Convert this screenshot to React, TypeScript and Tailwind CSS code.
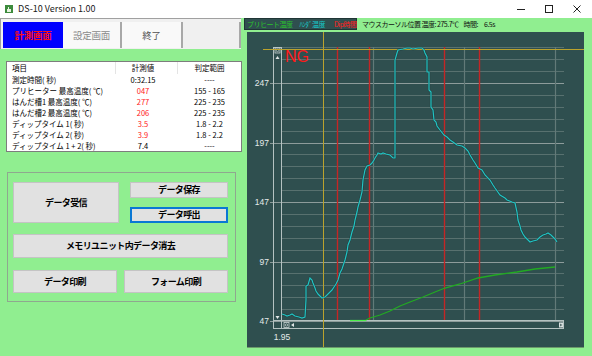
import React from "react";

const JP = { fontFamily: '"Noto Sans CJK JP", "Noto Sans", sans-serif' };

const rows = [
  { name: "測定時間( 秒)", value: "0:32.15", ng: false, range: "----" },
  { name: "プリヒーター 最高温度( ℃)", value: "047", ng: true, range: "155 - 165" },
  { name: "はんだ槽1 最高温度( ℃)", value: "277", ng: true, range: "225 - 235" },
  { name: "はんだ槽2 最高温度( ℃)", value: "206", ng: true, range: "225 - 235" },
  { name: "ディップタイム 1( 秒)", value: "3.5", ng: true, range: "1.8 - 2.2" },
  { name: "ディップタイム 2( 秒)", value: "3.9", ng: true, range: "1.8 - 2.2" },
  { name: "ディップタイム 1 + 2( 秒)", value: "7.4", ng: false, range: "----" },
];

const solder: [number, number][] = [
  [282, 314], [285, 315], [287, 316], [290, 315], [292, 314], [295, 316], [299, 317], [302, 318],
  [305, 317], [306, 300], [306, 286], [308, 285], [310, 278], [312, 280], [313, 283], [315, 288],
  [316, 291], [318, 294], [320, 296], [322, 298], [325, 297], [327, 295], [330, 292], [332, 290],
  [334, 287], [336, 284], [338, 280], [340, 273], [342, 269], [345, 260], [347, 252], [348, 245],
  [350, 240], [352, 232], [354, 226], [355, 220], [357, 212], [358, 207], [360, 200], [362, 192],
  [363, 180], [365, 170], [367, 166], [370, 165], [372, 163], [374, 160], [375, 158], [377, 155],
  [378, 153], [381, 154], [383, 153], [386, 154], [390, 155], [393, 158], [395, 158], [395, 60],
  [397, 53], [398, 50], [403, 49], [407, 48], [410, 48], [413, 49], [418, 48], [422, 48],
  [424, 50], [425, 53], [427, 57], [427, 72], [429, 72], [429, 90], [431, 92], [431, 107],
  [433, 110], [434, 120], [436, 122], [437, 126], [440, 130], [444, 135], [447, 137], [450, 140],
  [453, 142], [457, 145], [462, 146], [465, 148], [468, 151], [470, 155], [473, 160], [475, 163],
  [478, 168], [482, 170], [485, 175], [490, 180], [493, 185], [495, 188], [500, 195], [505, 198],
  [507, 200], [512, 202], [515, 203], [517, 212], [518, 220], [520, 226], [521, 230], [523, 234],
  [525, 237], [528, 240], [530, 242], [533, 241], [537, 240], [540, 237], [543, 235], [546, 234],
  [548, 233], [551, 235], [553, 237], [555, 239], [557, 242],
];

const preheat: [number, number][] = [
  [366, 320], [370, 318], [380, 315], [390, 311], [400, 306], [410, 302], [423, 297], [435, 292],
  [445, 288], [460, 284], [478, 278], [495, 275], [517, 272], [535, 269], [555, 267],
];

const pts = (p: [number, number][]) => p.map(([x, y]) => `${x},${y}`).join(" ");
const yOf = (v: number) => 321 - (v - 47) * 1.19;

const dipLines = [337, 369, 444, 479];
const timeGrid = [373, 464, 555];

function Chart() {
  const grid = [];
  for (let v = 47; v <= 277; v += 10) grid.push(v);
  return (
    <svg width={337} height={315} viewBox="247 32 337 315" className="block">
      <rect x={247} y={32} width={337} height={315} fill="#2f4f4f" />
      {grid.map((v) => {
        const major = (v - 47) % 50 === 0;
        const y = Math.round(yOf(v));
        return (
          <rect key={"h" + v} x={major ? 270 : 282} y={y} width={major ? 294 : 282} height={1} fill={major ? "#8d9c9b" : "#58716f"} />
        );
      })}
      {timeGrid.map((x) => (
        <line key={"g" + x} x1={x + 0.5} x2={x + 0.5} y1={47} y2={321} stroke="#627a78" strokeWidth={1.2} />
      ))}
      {dipLines.map((x) => (
        <line key={"r" + x} x1={x + 0.5} x2={x + 0.5} y1={47} y2={321} stroke="#c42626" strokeWidth={1.4} />
      ))}
      {/* scroll bars */}
      <rect x={273.5} y={47.5} width={8} height={281} fill="none" stroke="#b4c2c1" shapeRendering="crispEdges" />
      <rect x={273.5} y={320.5} width={290} height={8} fill="none" stroke="#b4c2c1" shapeRendering="crispEdges" />
      <rect x={275} y={48} width={5} height={5} fill="none" stroke="#c8d2d1" strokeWidth={0.8} />
      <circle cx={277.5} cy={50.5} r={1.2} fill="none" stroke="#c8d2d1" strokeWidth={0.7} />
      <polygon points="275.5,59 279.5,59 277.5,56" fill="#e0e6e6" />
      <polygon points="275.5,316 279.5,316 277.5,319" fill="#e0e6e6" />
      <rect x={284} y={322.5} width={5} height={5} fill="none" stroke="#c8d2d1" strokeWidth={0.8} />
      <circle cx={286.5} cy={325} r={1.2} fill="none" stroke="#c8d2d1" strokeWidth={0.7} />
      <polygon points="294,323 294,327 291,325" fill="#e0e6e6" />
      <rect x={559} y={322.5} width={4} height={5} fill="#d8e0e0" />
      <polygon points="560,323.5 560,326.5 562.5,325" fill="#5a7070" />
      {/* cursor */}
      <rect x={263} y={49} width={321} height={1} fill="#bba22c" />
      <rect x={323} y={32} width={1} height={315} fill="#bba22c" />
      <polyline points="350,320.5 366,320.5" fill="none" stroke="#4cf04c" strokeWidth={1.2} />
      <polyline points={pts(preheat)} fill="none" stroke="#22aa22" strokeWidth={1.3} />
      <polyline points={pts(solder)} fill="none" stroke="#152e2e" strokeWidth={2.2} opacity={0.5} />
      <polyline points={pts(solder)} fill="none" stroke="#22c4c4" strokeWidth={1.2} />
      <text x={285} y={62} fontSize={16} fill="#ff1a1a" fontFamily="Liberation Sans, Arial, sans-serif">NG</text>
      {[47, 97, 147, 197, 247].map((v) => (
        <text key={"t" + v} x={269} y={yOf(v) + 3} fontSize={8.5} textAnchor="end" fill="#e4eaea" fontFamily="Liberation Sans, Arial, sans-serif">{v}</text>
      ))}
      <text x={282} y={340} fontSize={8.5} textAnchor="middle" fill="#e4eaea" fontFamily="Liberation Sans, Arial, sans-serif">1.95</text>
    </svg>
  );
}

function Btn({ label, className }: { label: string; className: string }) {
  return (
    <div className={`flex items-center justify-center whitespace-nowrap bg-[#e1e1e1] text-[9px] font-bold tracking-[-0.6px] text-black ${className}`} style={JP}>
      {label}
    </div>
  );
}

export default function App() {
  return (
    <div className="flex h-[356px] w-[592px] flex-col overflow-hidden bg-[#90ee90]">
      {/* title bar */}
      <div className="flex h-[18px] shrink-0 items-center bg-white" style={JP}>
        <svg width={8} height={8} viewBox="0 0 8 8" className="ml-[5px]">
          <rect width={8} height={8} fill="#3d8b3d" />
          <path d="M2 7V4h1V2h1v2h2v3z" fill="#e8f4e0" />
        </svg>
        <span className="ml-[5px] text-[9px] text-[#202020]">DS-10 Version 1.00</span>
        <div className="ml-auto flex items-center">
          <svg width={10} height={10} className="mr-[18px]"><line x1={1} x2={9} y1={5.5} y2={5.5} stroke="#222" /></svg>
          <svg width={10} height={10} className="mr-[18px]"><rect x={1.5} y={1.5} width={7} height={7} fill="none" stroke="#222" /></svg>
          <svg width={10} height={10} className="mr-[10px]"><path d="M1.5 1.5l7 7M8.5 1.5l-7 7" stroke="#222" /></svg>
        </div>
      </div>

      <div className="flex flex-1">
        {/* left column */}
        <div className="flex w-[244px] shrink-0 flex-col">
          <div className="flex h-[31px] w-[241px] border-l border-t border-[#a0a0a0] bg-[#f0f0f0] pl-[2px] pt-[3px] text-[9.5px] font-bold tracking-[-0.3px]" style={JP}>
            <div className="flex h-[26px] w-[60px] items-center justify-center bg-[#0000ff] text-[#ff1010]">計測画面</div>
            <div className="flex h-[26px] w-[59px] items-center justify-center border-r-2 border-[#a8a8a8] bg-[#f9f9f9] font-normal text-[#8a8a8a]">設定画面</div>
            <div className="flex h-[26px] w-[61px] items-center justify-center border-r-2 border-[#a8a8a8] bg-[#f9f9f9] font-normal text-[#505050]">終了</div>
            <div className="h-[26px] flex-1 border-r-2 border-[#a8a8a8] bg-[#f0f0f0]" />
          </div>

          {/* result table */}
          <div className="ml-[6px] mt-[12px] h-[91px] w-[236px] border border-[#7d7d7d] bg-white text-[7.5px] leading-none text-black" style={JP}>
            <div className="flex h-[12px] items-center">
              <div className="h-full w-[109px] border-r border-[#e4e4e4] pl-[5px] pt-[2px]">項目</div>
              <div className="w-[54px] text-center">計測値</div>
              <div className="h-full w-[8px] border-r border-[#e4e4e4]" />
              <div className="flex-1 text-center">判定範囲</div>
            </div>
            {rows.map((r) => (
              <div key={r.name} className="flex h-[11px] items-center">
                <div className="w-[109px] whitespace-nowrap pl-[5px]">{r.name}</div>
                <div className={`w-[54px] text-center ${r.ng ? "text-[#ff2020]" : "text-black"}`}>{r.value}</div>
                <div className="w-[8px]" />
                <div className="flex-1 text-center">{r.range}</div>
              </div>
            ))}
          </div>

          {/* buttons group */}
          <div className="ml-[7px] mt-[20px] flex h-[130px] w-[229px] flex-col border border-[#8fa88f] px-[5px] pt-[9px]">
            <div className="flex gap-[11px]">
              <Btn label="データ受信" className="h-[41px] w-[106px] border border-[#c4c4c4]" />
              <div className="flex flex-col gap-[9px]">
                <Btn label="データ保存" className="h-[16px] w-[98px] border border-[#c4c4c4]" />
                <Btn label="データ呼出" className="h-[16px] w-[98px] border-2 border-[#0a78d4]" />
              </div>
            </div>
            <Btn label="メモリユニット内データ消去" className="mt-[11px] h-[24px] w-[215px] border border-[#c4c4c4]" />
            <div className="mt-[12px] flex gap-[7px]">
              <Btn label="データ印刷" className="h-[23px] w-[104px] border border-[#c4c4c4]" />
              <Btn label="フォーム印刷" className="h-[23px] w-[104px] border border-[#c4c4c4]" />
            </div>
          </div>
        </div>

        {/* right column */}
        <div className="flex flex-1 flex-col">
          <div className="flex h-[14px] items-start whitespace-nowrap text-[7px] leading-none tracking-[-0.5px]" style={JP}>
            <div className="flex h-[12px] w-[113px] items-center border border-[#203535] bg-[#2f4f4f] pl-[2px]">
              <span className="text-[#2cc02c]">プリヒート温度</span>
              <span className="ml-[7px] text-[#16c8c8]">ﾊﾝﾀﾞ温度</span>
              <span className="ml-[9px] text-[#ff2020]">Dip時間</span>
            </div>
            <div className="ml-[5px] flex h-[12px] items-center text-[#111]">
              <span>マウスカーソル位置 温度: 275.7℃</span>
              <span className="ml-[5px]">時間:</span>
              <span className="ml-[6px]">6.5s</span>
            </div>
          </div>
          <div className="ml-[3px] w-[337px] border-b border-[#6b9b6b]">
            <Chart />
          </div>
        </div>
      </div>
    </div>
  );
}
